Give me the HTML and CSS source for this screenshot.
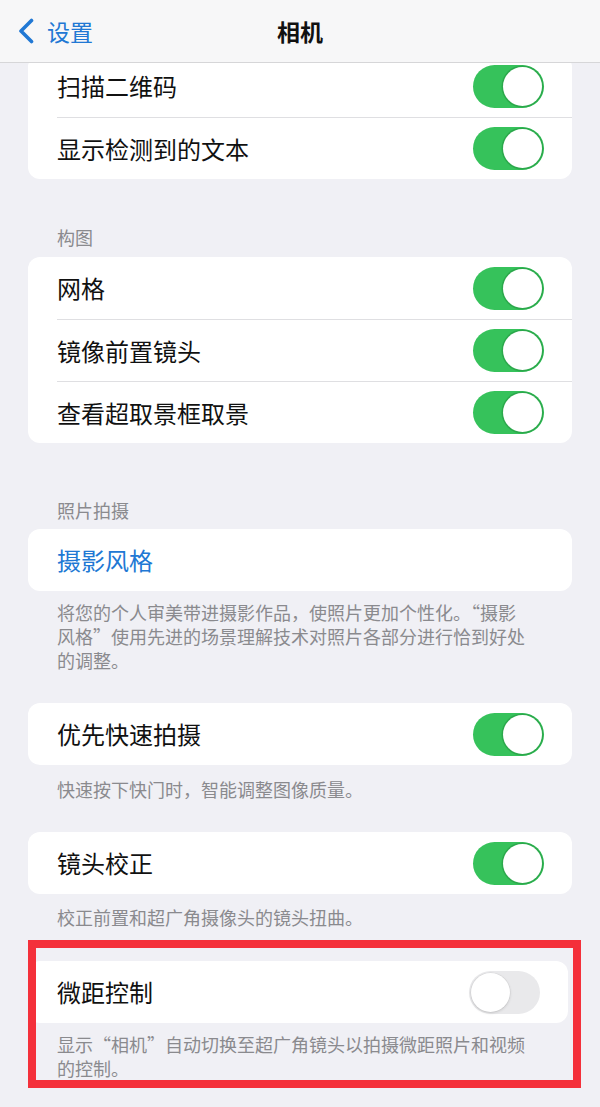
FILE: index.html
```html
<!DOCTYPE html>
<html lang="zh-CN">
<head>
    <meta charset="UTF-8">
    <title>相机</title>
    <link rel="stylesheet" href="styles.css">
</head>
<body>
<div class="nav">
    <a href="javascript:;" class="back">
        <svg class="chev" width="16" height="26" viewBox="0 0 16 26"><polyline points="13.5,2.5 3,13 13.5,23.5" fill="none" stroke="currentColor" stroke-width="3.6" stroke-linecap="round" stroke-linejoin="round"/></svg>
        <span>设置</span>
    </a>
    <h1 class="title">相机</h1>
    <div></div>
</div>

<div class="page">
    <div class="card card-first">
        <div class="row"><span class="txt">扫描二维码</span><i class="switch on"></i></div>
        <div class="row"><span class="txt">显示检测到的文本</span><i class="switch on"></i></div>
    </div>

    <p class="label label-grid">构图</p>
    <div class="card">
        <div class="row"><span class="txt">网格</span><i class="switch on"></i></div>
        <div class="row"><span class="txt">镜像前置镜头</span><i class="switch on"></i></div>
        <div class="row"><span class="txt">查看超取景框取景</span><i class="switch on"></i></div>
    </div>

    <p class="label label-photo">照片拍摄</p>
    <div class="card">
        <div class="row"><span class="txt link">摄影风格</span></div>
    </div>
    <p class="note note-style">将您的个人审美带进摄影作品，使照片更加个性化。“摄影<br>风格”使用先进的场景理解技术对照片各部分进行恰到好处<br>的调整。</p>

    <div class="card card-fast">
        <div class="row"><span class="txt">优先快速拍摄</span><i class="switch on"></i></div>
    </div>
    <p class="note note-fast">快速按下快门时，智能调整图像质量。</p>

    <div class="card card-lens">
        <div class="row"><span class="txt">镜头校正</span><i class="switch on"></i></div>
    </div>
    <p class="note note-lens">校正前置和超广角摄像头的镜头扭曲。</p>

    <div class="marked">
        <div class="card card-macro">
            <div class="row"><span class="txt">微距控制</span><i class="switch"></i></div>
        </div>
        <p class="note note-macro">显示“相机”自动切换至超广角镜头以拍摄微距照片和视频<br>的控制。</p>
        <div class="frame"></div>
    </div>
</div>
</body>
</html>
```

FILE: styles.css
```css
*{margin:0;padding:0;box-sizing:border-box;}
a{text-decoration:none;}
body{
    background:#f0f0f5;
    font-family:"Noto Sans CJK SC","Noto Sans",sans-serif;
    color:#111;
    width:600px;
    height:1107px;
    overflow:hidden;
}

/* 顶部导航 */
.nav{
    position:relative;
    z-index:2;
    display:grid;
    grid-template-columns:1fr auto 1fr;
    align-items:center;
    height:63px;
    background:#f7f7f8;
    border-bottom:1px solid #d6d6d8;
}
.back{
    display:flex;
    align-items:center;
    gap:13px;
    margin-left:18px;
    color:#2178d4;
    font-size:23px;
}
.chev{display:block;}
.title{
    font-size:23px;
    font-weight:700;
    color:#111;
}

.page{padding:0 28px;}

/* 卡片 */
.card{
    background:#fff;
    border-radius:12px;
}
.card-first{margin-top:-8px;}
.row{
    display:flex;
    align-items:center;
    justify-content:space-between;
    height:62px;
    margin-left:29px;
    padding-right:28px;
}
.row+.row{border-top:1px solid #dfdfe2;}
.txt{font-size:24px;line-height:1;}
.link{color:#2178d4;}

/* 开关 */
.switch{
    position:relative;
    display:block;
    width:71px;
    height:43px;
    border-radius:22px;
    background:#e9e9eb;
}
.switch:after{
    content:"";
    position:absolute;
    left:2px;
    top:2px;
    width:39px;
    height:39px;
    border-radius:50%;
    background:#fff;
    box-shadow:0 1px 3px rgba(0,0,0,.15),0 0 0 .5px rgba(0,0,0,.06);
}
.switch.on{background:#36c25b;}
.switch.on:after{
    left:30px;
    box-shadow:0 0 0 1.5px #2ba84b;
}

/* 分组标题 / 说明 */
.label{
    padding-left:29px;
    font-size:18px;
    line-height:24px;
    color:#8a8a8e;
}
.label-grid{margin:46px 0 8px;}
.label-photo{margin:55px 0 7px;}
.note{
    padding:0 10px 0 29px;
    font-size:18px;
    line-height:24px;
    color:#8a8a8e;
}
.note-style{padding-top:9px;}
.card-fast{margin-top:31px;}
.note-fast{padding-top:12px;}
.card-lens{margin-top:31px;}
.note-lens{padding-top:11px;}

/* 红框标注 */
.marked{
    position:relative;
    margin-top:32px;
}
.card-macro{margin-right:4px;}
.note-macro{padding-top:9px;}
.frame{
    position:absolute;
    left:0;
    right:-9px;
    top:-21px;
    bottom:-8px;
    border:8px solid #f4303a;
}
```
